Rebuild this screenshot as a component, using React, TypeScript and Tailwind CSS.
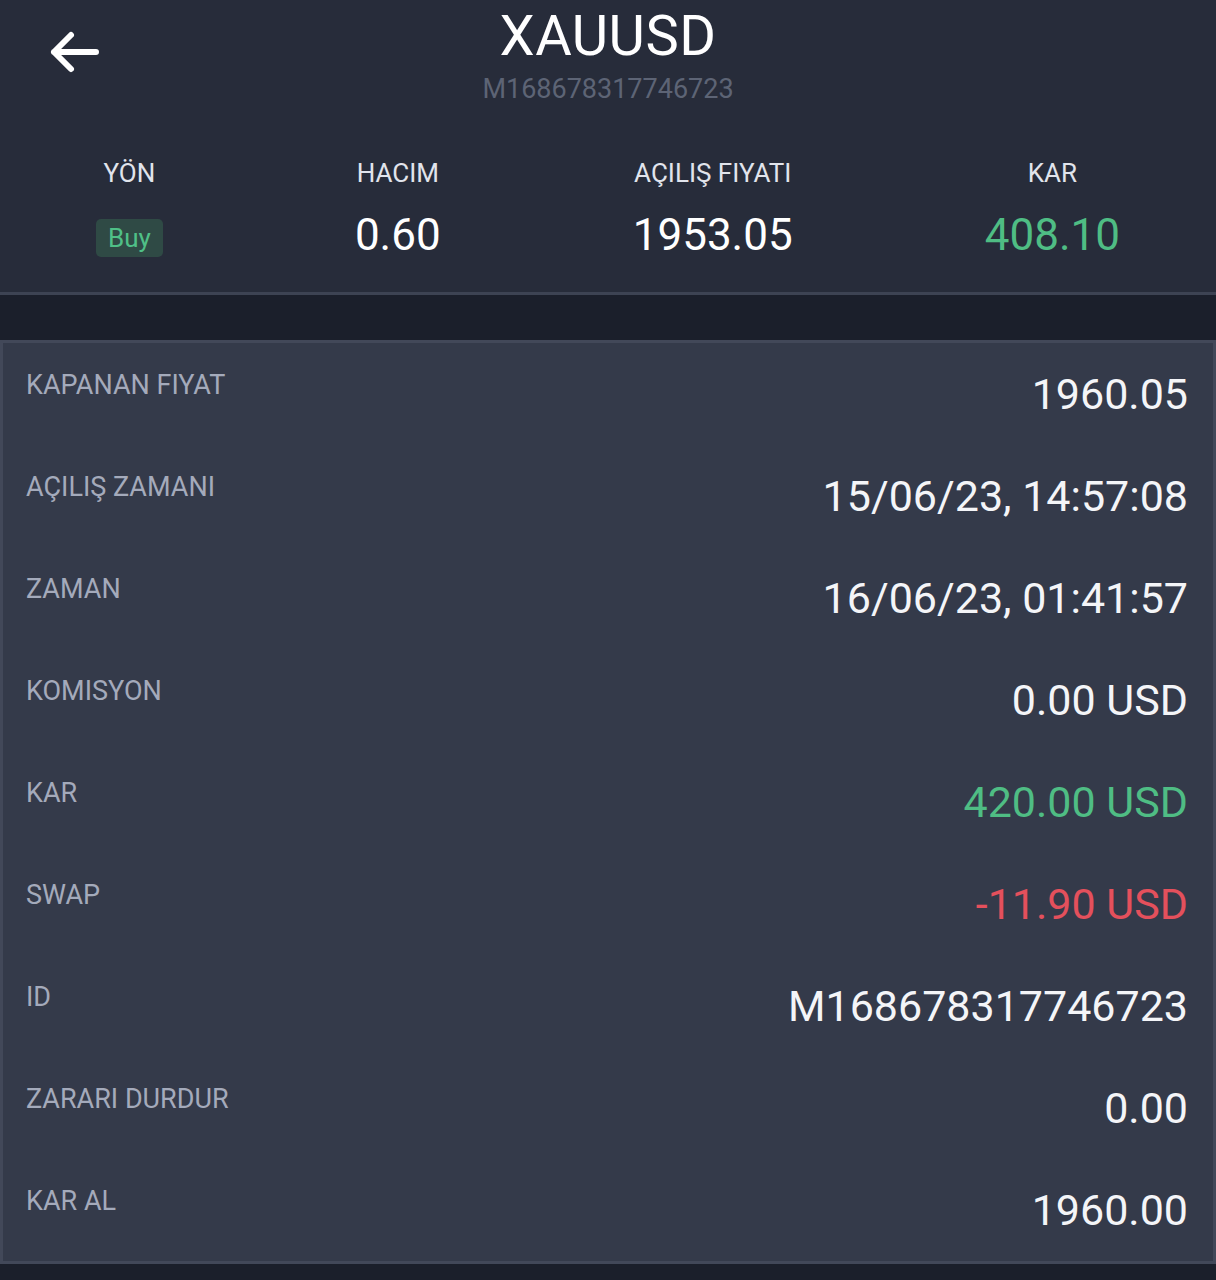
import React from 'react';

const rows = [
  { label: 'KAPANAN FIYAT', value: '1960.05', color: 'text-[#f4f5f8]' },
  { label: 'AÇILIŞ ZAMANI', value: '15/06/23, 14:57:08', color: 'text-[#f4f5f8]' },
  { label: 'ZAMAN', value: '16/06/23, 01:41:57', color: 'text-[#f4f5f8]' },
  { label: 'KOMISYON', value: '0.00 USD', color: 'text-[#f4f5f8]' },
  { label: 'KAR', value: '420.00 USD', color: 'text-[#4fbd84]' },
  { label: 'SWAP', value: '-11.90 USD', color: 'text-[#e4505c]' },
  { label: 'ID', value: 'M168678317746723', color: 'text-[#f4f5f8]' },
  { label: 'ZARARI DURDUR', value: '0.00', color: 'text-[#f4f5f8]' },
  { label: 'KAR AL', value: '1960.00', color: 'text-[#f4f5f8]' },
];

const App = () => {
  return (
    <div className="min-h-[1280px] bg-[#1b1f2b] font-['Roboto',sans-serif]">
      {/* Header */}
      <header className="relative bg-[#272c3a] border-b-[3px] border-[#3d4353] h-[295px]">
        <button className="absolute left-[48px] top-[28px] w-[52px] h-[48px] flex items-center justify-center">
          <svg width="52" height="48" viewBox="0 0 52 48" fill="none">
            <path d="M48 24H6M23 7L6 24l17 17" stroke="#ffffff" strokeWidth="6" strokeLinecap="round" strokeLinejoin="round" />
          </svg>
        </button>
        <div className="flex flex-col items-center pt-[6px]">
          <h1 className="text-[56px] leading-[60px] text-white tracking-[0.5px]">XAUUSD</h1>
          <p className="text-[27px] leading-[32px] mt-[7px] text-[#5d6475]">M168678317746723</p>
        </div>

        {/* Stats */}
        <div className="flex justify-between items-start px-[96px] mt-[52px]">
          <div className="flex flex-col items-center">
            <span className="text-[26px] leading-[32px] text-[#e1e4ec]">YÖN</span>
            <div className="h-[48px] mt-[20px] flex items-center">
              <span className="h-[38px] px-[12px] mt-[10px] rounded-[5px] bg-[#2f4a45] text-[#4fc087] text-[26px] leading-[38px]">Buy</span>
            </div>
          </div>
          <div className="flex flex-col items-center">
            <span className="text-[26px] leading-[32px] text-[#e1e4ec]">HACIM</span>
            <span className="mt-[22px] text-[44px] leading-[48px] text-white">0.60</span>
          </div>
          <div className="flex flex-col items-center">
            <span className="text-[26px] leading-[32px] text-[#e1e4ec]">AÇILIŞ FIYATI</span>
            <span className="mt-[22px] text-[44px] leading-[48px] text-white">1953.05</span>
          </div>
          <div className="flex flex-col items-center">
            <span className="text-[26px] leading-[32px] text-[#e1e4ec]">KAR</span>
            <span className="mt-[22px] text-[44px] leading-[48px] text-[#4fbd84]">408.10</span>
          </div>
        </div>
      </header>

      {/* Spacer band */}
      <div className="h-[45px]" />

      {/* Details card */}
      <section className="bg-[#343a4a] border-[3px] border-[#424859]">
        {rows.map((row) => (
          <div key={row.label} className="h-[102px] flex justify-between items-start pl-[23px] pr-[25px] pt-[26px]">
            <span className="text-[27px] leading-[30px] mt-[1px] text-[#a4aabb]">{row.label}</span>
            <span className={`${row.color} text-[43px] leading-[50px]`}>{row.value}</span>
          </div>
        ))}
      </section>
    </div>
  );
};

export default App;
